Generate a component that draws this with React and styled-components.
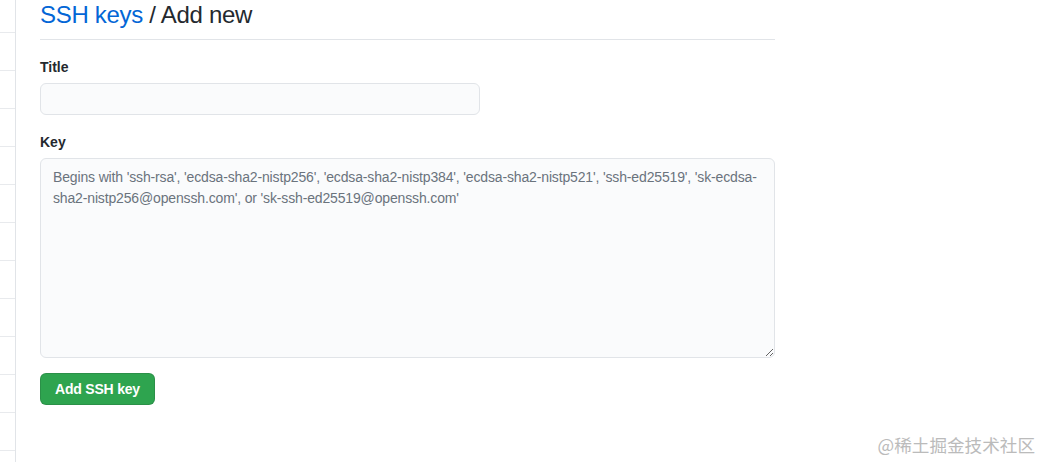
import React from 'react';
import styled, { createGlobalStyle } from 'styled-components';

const Global = createGlobalStyle`
  html, body {
    margin: 0;
    padding: 0;
    background: #ffffff;
  }
  body {
    font-family: "Liberation Sans", Arial, sans-serif;
    font-size: 14px;
    color: #24292e;
  }
`;

const Page = styled.div`
  display: flex;
  min-height: 462px;
  position: relative;
  overflow: hidden;
`;

const Sidebar = styled.nav`
  width: 15px;
  flex-shrink: 0;
  border-right: 1px solid #e1e4e8;
  display: flex;
  flex-direction: column;
`;

const SideRow = styled.div`
  height: ${p => (p.$first ? '32px' : '37px')};
  border-bottom: 1px solid #e8eaed;
  flex-shrink: 0;
`;

const Main = styled.main`
  width: 735px;
  padding-left: 24px;
`;

const Header = styled.div`
  border-bottom: 1px solid #e1e4e8;
  padding-bottom: 9px;
  margin-bottom: 16px;
`;

const Heading = styled.h2`
  margin: 0;
  font-size: 24px;
  font-weight: 400;
  line-height: 30px;
  letter-spacing: -0.3px;
  color: #24292e;

  a {
    color: #0366d6;
    text-decoration: none;
  }
`;

const Field = styled.div`
  margin-bottom: 16px;
`;

const Label = styled.label`
  display: block;
  font-weight: 600;
  font-size: 14px;
  line-height: 21px;
  padding-top: 1px;
  margin-bottom: 5px;
`;

const Input = styled.input`
  display: block;
  box-sizing: border-box;
  width: ${p => p.$width || '100%'};
  height: 32px;
  padding: 5px 12px;
  font: inherit;
  background: #fafbfc;
  border: 1px solid #e1e4e8;
  border-radius: 6px;
  outline: none;
`;

const TextArea = styled.textarea`
  display: block;
  box-sizing: border-box;
  width: 100%;
  height: 200px;
  padding: 8px 12px;
  font: inherit;
  font-size: 14px;
  line-height: 21px;
  letter-spacing: -0.15px;
  color: #24292e;
  background: #fafbfc;
  border: 1px solid #e1e4e8;
  border-radius: 6px;
  outline: none;

  &::placeholder {
    color: #6a737d;
  }
`;

const Button = styled.button`
  display: inline-block;
  height: 32px;
  padding: 0 14px;
  margin-top: -1px;
  font: inherit;
  font-size: 14px;
  font-weight: 700;
  letter-spacing: -0.2px;
  color: #ffffff;
  background: #2ea44f;
  border: 1px solid rgba(27, 31, 35, 0.15);
  border-radius: 6px;
  cursor: pointer;
`;

const Watermark = styled.div`
  position: absolute;
  right: 8px;
  bottom: 5px;
  font-family: "Noto Sans CJK SC", sans-serif;
  font-size: 17.6px;
  color: #b4b4b4;
  opacity: 0.9;
`;

const App = () => {
  const rows = Array.from({ length: 12 });
  return (
    <>
      <Global />
      <Page>
        <Sidebar>
          {rows.map((_, i) => (
            <SideRow key={i} $first={i === 0} />
          ))}
        </Sidebar>
        <Main>
          <Header>
            <Heading>
              <a href="#keys">SSH keys</a> / Add new
            </Heading>
          </Header>
          <Field>
            <Label htmlFor="title">Title</Label>
            <Input id="title" type="text" $width="440px" />
          </Field>
          <Field>
            <Label htmlFor="key">Key</Label>
            <TextArea
              id="key"
              placeholder="Begins with 'ssh-rsa', 'ecdsa-sha2-nistp256', 'ecdsa-sha2-nistp384', 'ecdsa-sha2-nistp521', 'ssh-ed25519', 'sk-ecdsa-sha2-nistp256@openssh.com', or 'sk-ssh-ed25519@openssh.com'"
            />
          </Field>
          <Button type="submit">Add SSH key</Button>
        </Main>
        <Watermark>@稀土掘金技术社区</Watermark>
      </Page>
    </>
  );
};

export default App;
